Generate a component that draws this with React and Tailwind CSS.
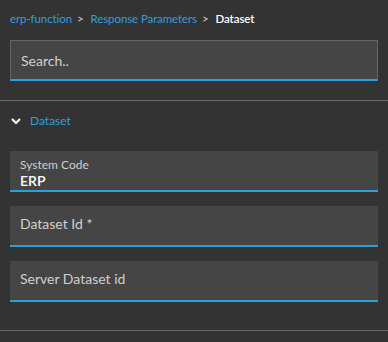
import React from 'react';

function Field({ label, value }) {
  return (
    <div className="mx-[10px] h-[41px] bg-[#454545] border-b-2 border-[#2d9fe0] px-[10px] flex flex-col justify-center">
      {value ? (
        <>
          <span className="text-[12px] leading-[15px] text-[#d0d0d0] mt-[5px]">{label}</span>
          <span className="text-[14px] leading-[17px] font-semibold text-white">{value}</span>
        </>
      ) : (
        <span className="text-[14px] leading-[17px] text-[#d0d0d0] -mt-[4px]">{label}</span>
      )}
    </div>
  );
}

export default function App() {
  return (
    <div className="w-[388px] h-[342px] bg-[#333333] overflow-hidden" style={{ fontFamily: 'Lato, "Noto Sans", sans-serif' }}>
      <div className="px-[10px] pt-[11px] h-[40px] text-[11.5px] leading-[16px] tracking-[-0.1px] flex items-start">
        <span className="text-[#2d9fe0]">erp-function</span>
        <span className="text-[#cfcfcf] ml-[5px] mr-[7px]">&gt;</span>
        <span className="text-[#2d9fe0]">Response Parameters</span>
        <span className="text-[#cfcfcf] ml-[5px] mr-[7px]">&gt;</span>
        <span className="text-white font-semibold">Dataset</span>
      </div>

      <div className="mx-[10px] h-[41px] bg-[#454545] border border-[#666666] border-b-2 border-b-[#2d9fe0] px-[10px] flex items-center">
        <span className="text-[14px] text-[#d0d0d0]">Search..</span>
      </div>

      <div className="mt-[19px] border-t border-[#6a6a6a]"></div>

      <div className="h-[40px] px-[10px] flex items-center gap-[8px]">
        <svg width="12" height="12" viewBox="0 0 12 12" className="shrink-0">
          <path d="M2 4 L6 8 L10 4" fill="none" stroke="#ffffff" strokeWidth="2.2" />
        </svg>
        <span className="text-[12px] text-[#2d9fe0]">Dataset</span>
      </div>

      <div className="mt-[10px] flex flex-col gap-[14px]">
        <Field label="System Code" value="ERP" />
        <Field label="Dataset Id *" />
        <Field label="Server Dataset id" />
      </div>

      <div className="mt-[28px] border-t border-[#6a6a6a]"></div>
    </div>
  );
}
